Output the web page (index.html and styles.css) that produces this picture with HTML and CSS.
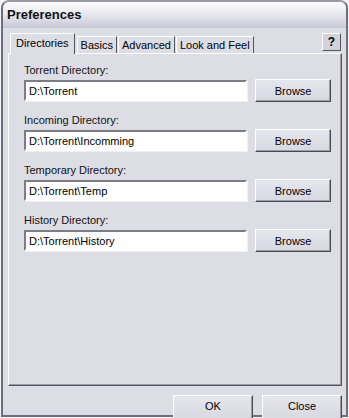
FILE: index.html
```html
<!DOCTYPE html>
<html lang="en">
<head>
    <meta charset="UTF-8">
    <meta name="viewport" content="width=device-width, initial-scale=1.0">
    <title>Preferences</title>
    <link rel="stylesheet" href="styles.css">
</head>
<body>
    <div class="window">
        <div class="titlebar">Preferences</div>
        <div class="content">
            <div class="tab-row">
                <div class="tab selected">Directories</div>
                <div class="tab">Basics</div>
                <div class="tab">Advanced</div>
                <div class="tab">Look and Feel</div>
                <div class="help-btn">?</div>
            </div>
            <div class="panel">
                <div class="field">
                    <label for="dir-torrent">Torrent Directory:</label>
                    <div class="field-row">
                        <input type="text" id="dir-torrent" value="D:\Torrent">
                        <button class="btn browse">Browse</button>
                    </div>
                </div>
                <div class="field">
                    <label for="dir-incoming">Incoming Directory:</label>
                    <div class="field-row">
                        <input type="text" id="dir-incoming" value="D:\Torrent\Incomming">
                        <button class="btn browse">Browse</button>
                    </div>
                </div>
                <div class="field">
                    <label for="dir-temp">Temporary Directory:</label>
                    <div class="field-row">
                        <input type="text" id="dir-temp" value="D:\Torrent\Temp">
                        <button class="btn browse">Browse</button>
                    </div>
                </div>
                <div class="field">
                    <label for="dir-history">History Directory:</label>
                    <div class="field-row">
                        <input type="text" id="dir-history" value="D:\Torrent\History">
                        <button class="btn browse">Browse</button>
                    </div>
                </div>
            </div>
            <div class="footer">
                <button class="btn footer-btn">OK</button>
                <button class="btn footer-btn">Close</button>
            </div>
        </div>
    </div>
</body>
</html>
```

FILE: styles.css
```css
html, body {
    margin: 0;
    height: 100%;
    overflow: hidden;
}

body {
    background-color: #f4f4f8;
    font-family: 'Liberation Sans', Arial, sans-serif;
    font-size: 11px;
    color: #000;
    padding: 0 1px;
}

.window {
    box-sizing: border-box;
    width: 347px;
    height: 417px;
    background-color: #dddde5;
    border: 2px solid #6e6e7c;
    border-top-color: #9a9aa6;
    border-radius: 8px 8px 0 0;
}

.titlebar {
    height: 26px;
    line-height: 26px;
    padding-left: 4px;
    font-size: 13px;
    font-weight: bold;
    color: #111;
    border-radius: 6px 6px 0 0;
    background: linear-gradient(#fcfcfe, #e9e9f0 45%, #c7c8d6);
}

.content {
    padding: 5px 4px 0 5px;
}

.tab-row {
    display: flex;
    align-items: flex-end;
    height: 20px;
    padding-left: 2px;
    position: relative;
    z-index: 1;
}

.tab {
    box-sizing: border-box;
    height: 17px;
    line-height: 16px;
    padding: 0 3px;
    border-top: 1px solid #fff;
    border-left: 1px solid #fff;
    border-right: 1px solid #555560;
    background-color: #dddde5;
}

.tab + .tab {
    margin-left: 1px;
}

.tab.selected {
    height: 21px;
    line-height: 18px;
    padding: 0 5px;
    margin-bottom: -1px;
    margin-right: 1px;
}

.help-btn {
    box-sizing: border-box;
    margin-left: auto;
    margin-right: 1px;
    margin-bottom: 2px;
    width: 19px;
    height: 18px;
    line-height: 16px;
    text-align: center;
    font-size: 12px;
    font-weight: bold;
    background-color: #d2d2da;
    border: 1px solid #fff;
    border-right-color: #555560;
    border-bottom-color: #555560;
}

.panel {
    box-sizing: border-box;
    height: 333px;
    padding: 10px 10px 0 15px;
    border-top: 1px solid #fff;
    border-left: 1px solid #fff;
    border-right: 1px solid #555560;
    border-bottom: 1px solid #555560;
    box-shadow: inset -1px -1px 0 #9a9aa4;
}

.field {
    display: flex;
    flex-direction: column;
    gap: 2px;
    margin-bottom: 12px;
}

.field label {
    line-height: 13px;
    color: #111;
}

.field-row {
    display: flex;
    align-items: center;
    gap: 8px;
    height: 23px;
}

input[type="text"] {
    box-sizing: border-box;
    width: 224px;
    height: 21px;
    margin: 0;
    padding: 0 0 0 3px;
    font-family: inherit;
    font-size: 11px;
    color: #000;
    background-color: #fff;
    border: 2px solid #fff;
    border-top-color: #7c7c86;
    border-left-color: #7c7c86;
    box-shadow: 1px 1px 0 #f0f0f4;
    outline: none;
}

.btn {
    box-sizing: border-box;
    margin: 0;
    padding: 0;
    font-family: inherit;
    font-size: 11px;
    color: #000;
    background: linear-gradient(#e6e6ee, #d8d8e0);
    border: 1px solid #fff;
    border-right-color: #4a4a54;
    border-bottom-color: #4a4a54;
    box-shadow: inset -1px -1px 0 #9c9ca6;
}

.browse {
    width: 76px;
    height: 23px;
}

.footer {
    display: flex;
    justify-content: flex-end;
    gap: 9px;
    margin-top: 9px;
    position: relative;
    z-index: 1;
}

.footer-btn {
    width: 80px;
    height: 26px;
    padding-bottom: 4px;
}
```
